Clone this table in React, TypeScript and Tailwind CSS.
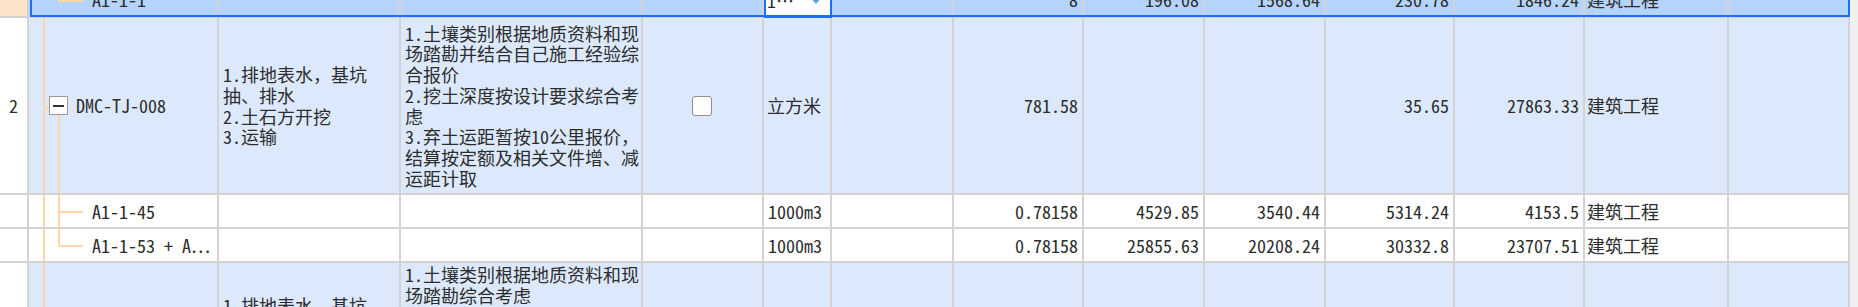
const COLS =
  "grid grid-cols-[29px_190px_182px_242px_121px_68px_122px_130px_121px_121px_129px_130px_144px_121px_8px]";
const CELL = "border-r-2 border-b-2 border-[#d3d3d3] flex items-center min-w-0 overflow-hidden";
const NUM = CELL + " justify-end pr-1 whitespace-nowrap";

const Line = ({ className }: { className: string }) => (
  <div className={"absolute bg-[#fdd8a6] " + className} />
);

const TreeCell = ({ kind, label }: { kind: string; label: string }) => {
  const parent = kind === "parent" || kind === "next";
  return (
    <div className={CELL + " relative " + (parent ? "pl-[20px]" : "pl-[63px]")}>
      {kind !== "top" && <Line className="left-[14px] top-0 bottom-[-2px] w-[2px]" />}
      {kind === "top" && <Line className="left-[29px] top-0 h-1/2 w-[2px]" />}
      {kind === "parent" && <Line className="left-[14px] top-1/2 w-[6px] h-[2px]" />}
      {kind === "parent" && <Line className="left-[29px] top-[97px] bottom-[-2px] w-[2px]" />}
      {kind === "mid" && <Line className="left-[29px] top-0 bottom-[-2px] w-[2px]" />}
      {kind === "last" && <Line className="left-[29px] top-0 h-1/2 w-[2px]" />}
      {(kind === "top" || kind === "mid" || kind === "last") && (
        <Line className="left-[29px] top-1/2 w-[25px] h-[2px]" />
      )}
      {parent && (
        <div className="relative z-10 w-[19px] h-[19px] border border-[#9a9a9a] bg-white flex items-center justify-center mr-[8px] shrink-0">
          <div className="w-[11px] h-[2px] bg-[#333]" />
        </div>
      )}
      <span className="whitespace-nowrap">{label}</span>
    </div>
  );
};

const Lines = ({ lines }: { lines: string[] }) => (
  <div className="whitespace-nowrap">
    {lines.map((l, i) => (
      <div key={i}>{l}</div>
    ))}
  </div>
);

const features = [
  "1.土壤类别根据地质资料和现",
  "场踏勘并结合自己施工经验综",
  "合报价",
  "2.挖土深度按设计要求综合考",
  "虑",
  "3.弃土运距暂按10公里报价，",
  "结算按定额及相关文件增、减",
  "运距计取",
];

const features2 = [
  "1.土壤类别根据地质资料和现",
  "场踏勘综合考虑",
  "2.挖土深度按设计要求综合考",
  "虑",
  "3.弃土运距暂按10公里报价，",
  "结算按定额及相关文件增、减",
  "运距计取",
];

const nameLines = ["1.排地表水，基坑", "抽、排水", "2.土石方开挖", "3.运输"];

const subRows = [
  { code: "A1-1-45", kind: "mid", q: "0.78158", p: "4529.85", t: "3540.44", p2: "5314.24", t2: "4153.5" },
  { code: "A1-1-53 + A…", kind: "last", q: "0.78158", p: "25855.63", t: "20208.24", p2: "30332.8", t2: "23707.51" },
];

export default function App() {
  return (
    <div className="w-[1858px] h-[307px] overflow-hidden bg-white text-[#2d2d2d] text-[18px] leading-[20.7px] font-['Noto_Sans_Mono_CJK_SC','Liberation_Mono','Noto_Sans_CJK_SC',monospace]">
      <div className="-mt-[17px]">
        {/* selected child row */}
        <div className={COLS + " relative h-[35px] bg-[#b4d4fc]"}>
          <div className={CELL + " bg-[#fde4c9]"} />
          <TreeCell kind="top" label="A1-1-1" />
          <div className={CELL} />
          <div className={CELL} />
          <div className={CELL} />
          <div className="flex items-center justify-between bg-white border-2 border-[#1a6ef7] pl-[1px] pr-[8px]">
            <span>1…</span>
            <svg width="12" height="8" viewBox="0 0 12 8">
              <path d="M0 0 L12 0 L6 7 Z" fill="#5b9de0" />
            </svg>
          </div>
          <div className={CELL} />
          <div className={NUM}>8</div>
          <div className={NUM}>196.08</div>
          <div className={NUM}>1568.64</div>
          <div className={NUM}>230.78</div>
          <div className={NUM}>1846.24</div>
          <div className={CELL + " pl-[2px]"}>建筑工程</div>
          <div className={CELL} />
          <div className="bg-[#f0f0f0]" />
          <div className="pointer-events-none absolute left-[30px] right-[8px] top-0 bottom-[1px] border-2 border-[#1a6ef7]" />
        </div>

        {/* group row 2 */}
        <div className={COLS + " h-[177px] bg-[#dce9fd]"}>
          <div className={CELL + " bg-white justify-center"}>2</div>
          <TreeCell kind="parent" label="DMC-TJ-008" />
          <div className={CELL + " pl-[4px]"}>
            <Lines lines={nameLines} />
          </div>
          <div className={CELL + " pl-[4px]"}>
            <Lines lines={features} />
          </div>
          <div className={CELL + " justify-center"}>
            <div className="w-[20px] h-[20px] bg-white border border-[#8f8f8f] rounded-[3px] mr-[1px]" />
          </div>
          <div className={CELL + " pl-[3px]"}>立方米</div>
          <div className={CELL} />
          <div className={NUM}>781.58</div>
          <div className={CELL} />
          <div className={CELL} />
          <div className={NUM}>35.65</div>
          <div className={NUM}>27863.33</div>
          <div className={CELL + " pl-[2px]"}>建筑工程</div>
          <div className={CELL} />
          <div className="bg-[#f0f0f0]" />
        </div>

        {subRows.map((r) => (
          <div key={r.code} className={COLS + " h-[34px] bg-white"}>
            <div className={CELL} />
            <TreeCell kind={r.kind} label={r.code} />
            <div className={CELL} />
            <div className={CELL} />
            <div className={CELL} />
            <div className={CELL + " pl-[4px]"}>1000m3</div>
            <div className={CELL} />
            <div className={NUM}>{r.q}</div>
            <div className={NUM}>{r.p}</div>
            <div className={NUM}>{r.t}</div>
            <div className={NUM}>{r.p2}</div>
            <div className={NUM}>{r.t2}</div>
            <div className={CELL + " pl-[2px]"}>建筑工程</div>
            <div className={CELL} />
            <div className="bg-[#f0f0f0]" />
          </div>
        ))}

        {/* next group row, mostly below the fold */}
        <div className={COLS + " h-[149px] bg-[#dce9fd]"}>
          <div className={CELL + " bg-white"} />
          <TreeCell kind="next" label="" />
          <div className={CELL + " pl-[4px]"}>
            <Lines lines={nameLines} />
          </div>
          <div className={CELL + " pl-[4px] items-start pt-[1px]"}>
            <Lines lines={features2} />
          </div>
          <div className={CELL} />
          <div className={CELL} />
          <div className={CELL} />
          <div className={CELL} />
          <div className={CELL} />
          <div className={CELL} />
          <div className={CELL} />
          <div className={CELL} />
          <div className={CELL} />
          <div className={CELL} />
          <div className="bg-[#f0f0f0]" />
        </div>
      </div>
    </div>
  );
}
